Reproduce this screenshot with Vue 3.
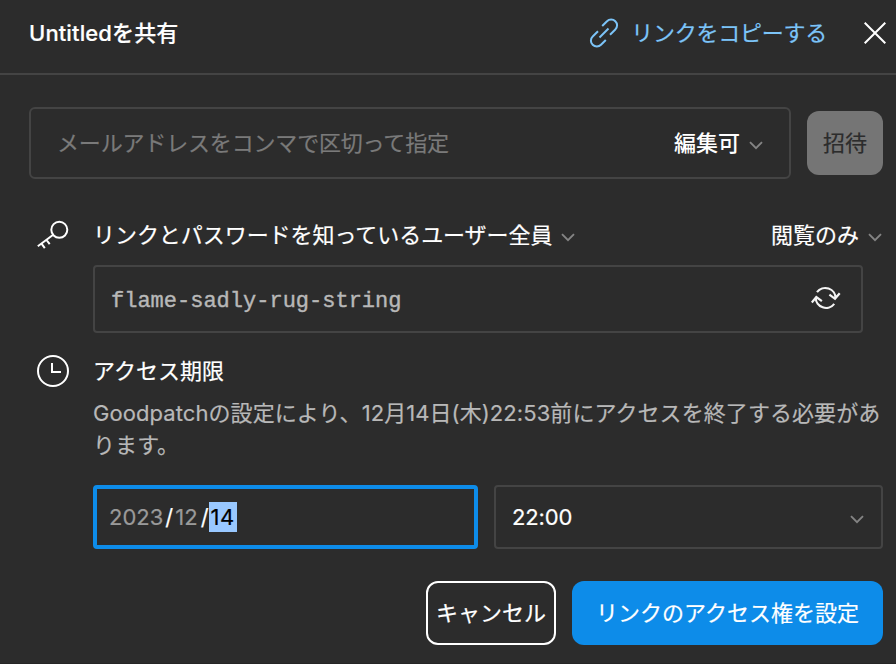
<script setup>
import { h } from 'vue'

const password = 'flame-sadly-rug-string'

const Chevron = () =>
  h('svg', { width: 14, height: 9, viewBox: '0 0 14 9', fill: 'none' }, [
    h('path', { d: 'M1 1.2 7 7.2 13 1.2', stroke: '#848484', 'stroke-width': 1.9 }),
  ])
</script>

<template>
  <div class="dialog">
    <header class="header">
      <h1 class="title">Untitledを共有</h1>
      <a class="copy">
        <svg width="32" height="32" viewBox="0 0 32 32" fill="none" stroke="#7cc4f8" stroke-width="2">
          <path d="M14.2 9 19 4.200a5.700 5.700 0 0 1 8.300 0 5.700 5.700 0 0 1 0 8.300L22 17.800" />
          <path d="M17.800 23 13 27.800a5.700 5.700 0 0 1-8.300 0 5.700 5.700 0 0 1 0-8.300L10 14.200" />
          <path d="M11.500 20.500 20.500 11.500" />
        </svg>
        <span>リンクをコピーする</span>
      </a>
      <svg class="close" width="22" height="22" viewBox="0 0 22 22" stroke="#fff" stroke-width="2">
        <path d="M.7.7 21.300 21.300M21.300.7.7 21.300" />
      </svg>
    </header>

    <section class="invite">
      <div class="email">
        <span class="placeholder">メールアドレスをコンマで区切って指定</span>
        <span class="role">編集可</span>
        <Chevron class="chev" />
      </div>
      <button class="invite-btn">招待</button>
    </section>

    <section class="row access">
      <svg class="icon" width="32" height="32" viewBox="0 0 32 32" fill="none" stroke="#fff" stroke-width="2">
        <circle cx="22.300" cy="10.800" r="8" />
        <path d="M16.200 15.800.8 27.300M4.500 24.700l3.300 4.400M9.500 21l3.200 4.200" />
      </svg>
      <span class="audience">リンクとパスワードを知っているユーザー全員</span>
      <Chevron class="chev" />
      <span class="view">閲覧のみ</span>
      <Chevron class="chev last" />
    </section>

    <div class="password">
      <span class="phrase">{{ password }}</span>
      <svg class="refresh" width="30" height="24" viewBox="0 0 30 24" fill="none" stroke="#f4f4f4" stroke-width="2.200">
        <path d="M6 6.200A10.300 10.300 0 0 1 24.600 12.500M18.400 8.600l5.600 4.200 4.700-5.500" />
        <path d="M23.200 17.800A10.300 10.300 0 0 1 4.700 11.500M10.900 15.200 5.300 11 .8 16.500" />
      </svg>
    </div>

    <section class="row expiry">
      <svg class="icon" width="32" height="32" viewBox="0 0 32 32" fill="none" stroke="#fff" stroke-width="2">
        <circle cx="16" cy="16" r="15" />
        <path d="M15 8v9h9" />
      </svg>
      <span>アクセス期限</span>
    </section>
    <p class="desc">Goodpatchの設定により、12月14日(木)22:53前にアクセスを終了する必要があ<br>ります。</p>

    <div class="fields">
      <div class="date"><span>2023</span><b>/</b><span>12</span><b class="tight">/</b><mark>14</mark></div>
      <div class="time"><span>22:00</span><Chevron class="chev" /></div>
    </div>

    <footer class="actions">
      <button class="cancel">キャンセル</button>
      <button class="primary">リンクのアクセス権を設定</button>
    </footer>
  </div>
</template>

<style>
body {
  background: #2c2c2c;
}
</style>

<style scoped>
* {
  box-sizing: border-box;
}
.dialog {
  width: 896px;
  height: 664px;
  overflow: hidden;
  background: #2c2c2c;
  border-bottom: 1px solid #252525;
  color: #fff;
  font: 400 22px/32px Inter, "Noto Sans CJK JP", sans-serif;
  white-space: nowrap;
  -webkit-text-stroke: 0.2px currentColor;
}
svg {
  display: block;
  flex: none;
}
button {
  font: inherit;
  padding: 0;
  border: 0;
}
.header {
  display: flex;
  align-items: center;
  height: 75px;
  padding: 0 10px 8px 29px;
  border-bottom: 2px solid #444;
}
.title {
  margin: 0;
  font-size: 22px;
  font-weight: 500;
  line-height: 32px;
  letter-spacing: 0.12px;
}
.copy {
  display: flex;
  align-items: center;
  gap: 11px;
  margin-left: auto;
  color: #7cc4f8;
  letter-spacing: -0.25px;
}
.close {
  margin-left: 37px;
}
.invite {
  display: flex;
  align-items: center;
  gap: 16px;
  padding: 32px 13px 0 29px;
}
.email {
  display: flex;
  align-items: center;
  width: 762px;
  height: 72px;
  padding: 0 26px;
  border: 2px solid #444;
  border-radius: 6px;
}
.placeholder {
  color: #7a7a7a;
  letter-spacing: -0.17px;
}
.role {
  margin-left: auto;
  margin-right: 9px;
  font-weight: 500;
  -webkit-text-stroke-width: 0;
}
.chev {
  position: relative;
  top: 2px;
}
.invite-btn {
  width: 76px;
  height: 64px;
  border-radius: 12px;
  background: #757575;
  color: #2c2c2c;
}
.row {
  display: flex;
  align-items: center;
  height: 32px;
  padding-left: 37px;
}
.icon {
  margin-right: 24px;
}
.access {
  margin-top: 40px;
  padding-right: 14px;
}
.audience {
  margin-right: 9px;
  letter-spacing: -0.05px;
}
.view {
  margin-left: auto;
  margin-right: 9px;
}
.last {
  margin-right: 0;
}
.password {
  display: flex;
  align-items: center;
  justify-content: space-between;
  width: 770px;
  height: 68px;
  margin: 14px 0 0 93px;
  padding: 0 20px 0 16px;
  border: 2px solid #444;
  border-radius: 4px;
  color: #b8b8b8;
  font-family: "Liberation Mono", monospace;
}
.phrase {
  padding-top: 6px;
  -webkit-text-stroke-width: 0.4px;
}
.refresh {
  margin-bottom: 2px;
}
.expiry {
  margin-top: 22px;
}
.desc {
  margin: 10px 0 0 93px;
  color: #b8b8b8;
  letter-spacing: 0.07px;
}
.fields {
  display: flex;
  gap: 16px;
  margin: 24px 13px 0 93px;
}
.date {
  display: flex;
  align-items: center;
  width: 385px;
  height: 64px;
  padding-left: 12px;
  border: 4px solid #0d8ce9;
  border-radius: 4px;
  color: #9a9a9a;
}
.date b {
  padding: 0 2px;
  color: #fff;
  font-weight: 400;
}
.date .tight {
  padding: 0 0 0 3px;
}
mark {
  height: 30px;
  padding: 0 2px;
  background: #99c8ff;
  color: #000;
  line-height: 30px;
  letter-spacing: 0.4px;
}
.time {
  display: flex;
  align-items: center;
  justify-content: space-between;
  flex: 1;
  height: 64px;
  padding: 0 17px 0 16px;
  border: 2px solid #444;
  border-radius: 4px;
  letter-spacing: -0.15px;
}
.actions {
  display: flex;
  justify-content: flex-end;
  gap: 16px;
  margin: 32px 13px 0 0;
}
.cancel {
  width: 130px;
  height: 64px;
  border: 2px solid #fff;
  border-radius: 12px;
  background: none;
  color: #fff;
}
.primary {
  width: 311px;
  height: 64px;
  border-radius: 12px;
  background: #0d8ce9;
  color: #fff;
}
</style>
